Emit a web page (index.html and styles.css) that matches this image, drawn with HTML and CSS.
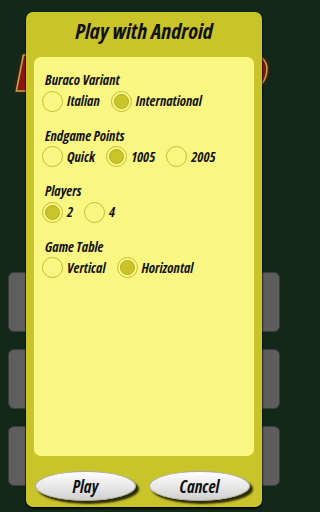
FILE: index.html
```html
<!DOCTYPE html>
<html>
<head>
<meta charset="utf-8">
<link rel="stylesheet" href="styles.css">
</head>
<body>
<div class="screen">
  <div class="logo">BURACO</div>
  <div class="menu">
    <div class="menu-btn"></div>
    <div class="menu-btn"></div>
    <div class="menu-btn"></div>
  </div>
</div>

<div class="dialog">
  <div class="title">Play with Android</div>
  <div class="panel">
    <div class="group">
      <div class="glabel">Buraco Variant</div>
      <div class="row">
        <div class="opt"><span class="radio"></span><span class="otext">Italian</span></div>
        <div class="opt"><span class="radio on"></span><span class="otext">International</span></div>
      </div>
    </div>
    <div class="group">
      <div class="glabel">Endgame Points</div>
      <div class="row">
        <div class="opt"><span class="radio"></span><span class="otext">Quick</span></div>
        <div class="opt"><span class="radio on"></span><span class="otext">1005</span></div>
        <div class="opt"><span class="radio"></span><span class="otext">2005</span></div>
      </div>
    </div>
    <div class="group">
      <div class="glabel">Players</div>
      <div class="row">
        <div class="opt"><span class="radio on"></span><span class="otext">2</span></div>
        <div class="opt"><span class="radio"></span><span class="otext">4</span></div>
      </div>
    </div>
    <div class="group">
      <div class="glabel">Game Table</div>
      <div class="row">
        <div class="opt"><span class="radio"></span><span class="otext">Vertical</span></div>
        <div class="opt"><span class="radio on"></span><span class="otext">Horizontal</span></div>
      </div>
    </div>
  </div>
  <div class="buttons">
    <div class="pill">Play</div>
    <div class="pill">Cancel</div>
  </div>
</div>
</body>
</html>
```

FILE: styles.css
```css
html, body {
  margin: 0;
  padding: 0;
}
body {
  width: 288px;
  height: 512px;
  background: #12291a;
  overflow: hidden;
  position: relative;
  font-family: "Open Sans", "DejaVu Sans Condensed", sans-serif;
  font-stretch: 75%;
}
.screen {
  display: flex;
  flex-direction: column;
  align-items: center;
  padding-top: 46px;
}
.logo {
  font-family: "DejaVu Sans", sans-serif;
  font-stretch: normal;
  font-size: 50px;
  font-weight: bold;
  font-style: italic;
  letter-spacing: 4px;
  color: #8e1610;
  -webkit-text-stroke: 1.5px #b9a847;
  text-shadow: 0 0 5px #8a1a10, 0 0 2px #a02010;
  line-height: 56px;
  height: 56px;
}
.menu {
  margin-top: 170px;
  width: 272px;
  display: flex;
  flex-direction: column;
  gap: 17px;
}
.menu-btn {
  height: 58px;
  background: #5e5e5e;
  border: 1px solid #3d3d3d;
  border-radius: 6px;
}

.dialog {
  position: absolute;
  left: 26px;
  top: 12px;
  width: 236px;
  height: 495px;
  background: #c9c42a;
  border-radius: 7px;
  box-shadow: -1px 1px 1px rgba(0,0,0,0.6), 1px 2px 2px rgba(0,0,0,0.6);
  display: flex;
  flex-direction: column;
}
.title {
  height: 45px;
  display: flex;
  align-items: center;
  justify-content: center;
  font-size: 22px;
  font-weight: bold;
  font-style: italic;
  color: #111;
  padding-bottom: 10px;
  box-sizing: border-box;
}
.panel {
  margin: 0 8px;
  height: 399px;
  background: #faf682;
  border-radius: 7px;
  padding: 13px 0 0 8px;
  box-sizing: border-box;
  display: flex;
  flex-direction: column;
  gap: 13.5px;
}
.group {
  display: flex;
  flex-direction: column;
}
.glabel {
  height: 20px;
  line-height: 20px;
  padding-left: 3px;
  font-size: 14px;
  font-weight: bold;
  font-style: italic;
  color: #111;
}
.row {
  height: 22px;
  display: flex;
  align-items: center;
  gap: 11px;
}
.opt {
  display: flex;
  align-items: center;
  gap: 4px;
}
.radio {
  width: 19px;
  height: 19px;
  border: 1px solid #c2bd30;
  border-radius: 50%;
  position: relative;
  flex: none;
}
.radio.on::after {
  content: "";
  position: absolute;
  left: 2px;
  top: 2px;
  width: 13px;
  height: 13px;
  border: 1px solid #b3ae22;
  border-radius: 50%;
  background: #c9c42a;
}
.otext {
  font-size: 14px;
  font-weight: bold;
  font-style: italic;
  color: #111;
  line-height: 22px;
}
.buttons {
  display: flex;
  padding: 15px 0 0 9px;
  gap: 13px;
}
.pill {
  width: 101px;
  height: 30px;
  border-radius: 50%;
  background: linear-gradient(#fdfdfd, #e6e6e6 55%, #cfcfcf);
  border: 1px solid #a8a8a8;
  box-sizing: border-box;
  box-shadow: 3px 3px 2px #2c2b08;
  display: flex;
  align-items: center;
  justify-content: center;
  font-size: 17px;
  font-weight: bold;
  font-style: italic;
  color: #111;
}
```
